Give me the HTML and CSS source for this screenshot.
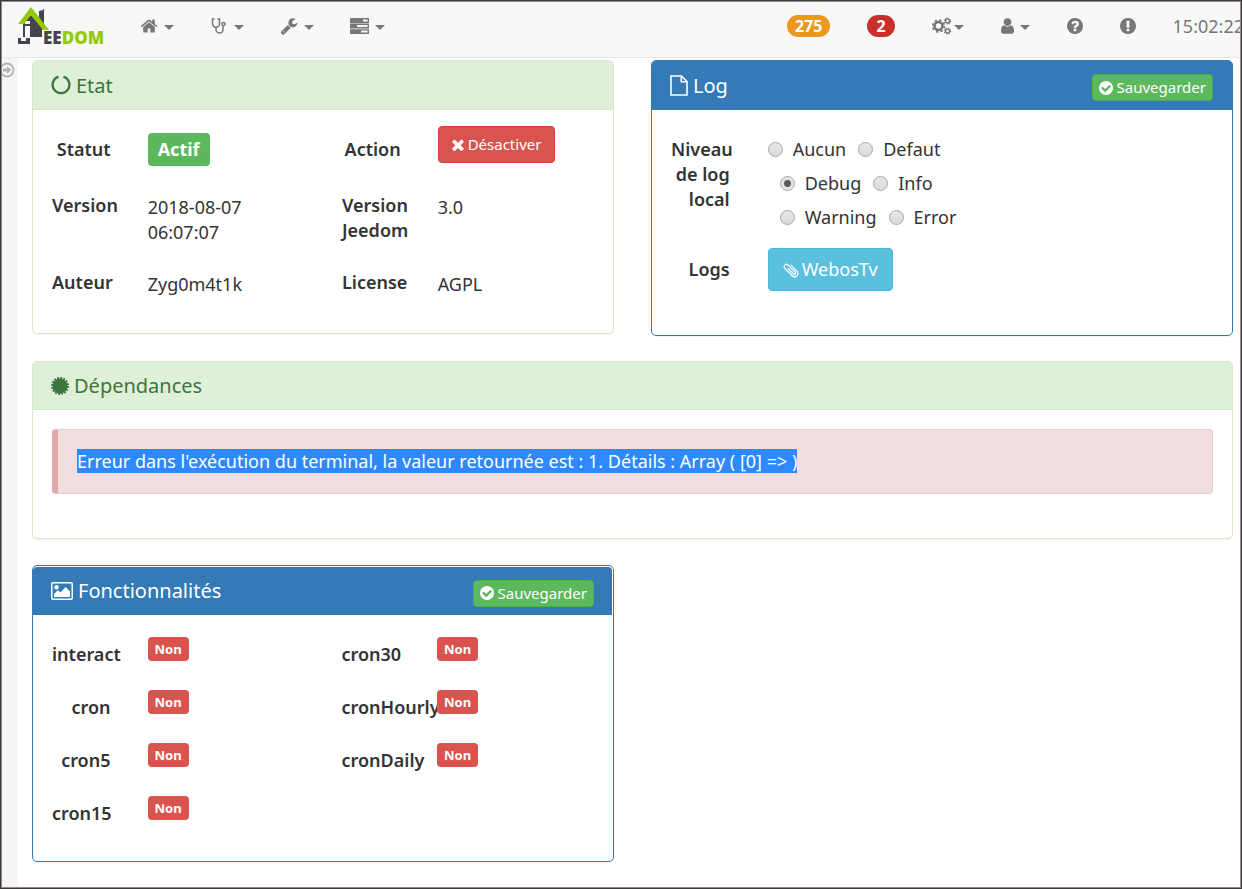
FILE: index.html
```html
<!DOCTYPE html>
<html lang="fr">
<head>
<meta charset="utf-8">
<title>Jeedom</title>
<link rel="stylesheet" href="styles.css">
</head>
<body>
<svg class="defs" aria-hidden="true">
  <symbol id="check" viewBox="128 128 1536 1536"><path d="M1412 734q0-28-18-46l-91-90q-19-19-45-19t-45 19l-408 407-226-226q-19-19-45-19t-45 19l-91 90q-18 18-18 46 0 27 18 45l362 362q19 19 45 19 27 0 46-19l543-543q18-18 18-45zm252 162q0 209-103 385.500t-279.500 279.500-385.500 103-385.500-103-279.500-279.500-103-385.500 103-385.500 279.500-279.500 385.500-103 385.500 103 279.500 279.500 103 385.500z"/></symbol>
</svg>
<header class="navbar">
  <a class="brand" href="#" aria-label="Jeedom">
    <svg width="90" height="48" viewBox="0 0 90 48">
      <path fill="#45444c" d="M21 5l4-1v-1l2 1h-1v18h-5z"/>
      <path fill="#45444c" d="M5 16l8-7 11 13v9H12v-16H7v16H5z"/>
      <path fill="#45444c" d="M7 18h5v2H7zM0 32h3v3h5v-3h4v6H0z"/>
      <path fill="#94ca02" d="M13 1L0 18h6l7-9 12 15h6z"/>
      <text class="brand-text" x="25" y="38" fill="#45444c">EE<tspan fill="#94ca02">DOM</tspan></text>
    </svg>
  </a>
  <nav class="menu">
    <a href="#" aria-label="Accueil"><svg class="icon" width="18" height="18" viewBox="0 0 1792 1792"><path d="M1472 992v480q0 26-19 45t-45 19h-384v-384h-256v384h-384q-26 0-45-19t-19-45v-480q0-1 .5-3t.5-3l575-474 575 474q1 2 1 6zm223-69l-62 74q-8 9-21 11h-3q-13 0-21-7l-692-577-692 577q-12 8-24 7-13-2-21-11l-62-74q-8-10-7-23.5t11-21.5l719-599q32-26 76-26t76 26l244 204v-195q0-14 9-23t23-9h192q14 0 23 9t9 23v408l219 182q10 8 11 21.5t-7 23.5z"/></svg><i class="caret"></i></a>
    <a href="#" aria-label="Analyse"><svg class="icon line" width="18" height="18" viewBox="0 0 18 18"><path d="M4.500 2H2.500v4.500a3.500 3.700 0 0 0 7 0V2h-2M6 10.500v2a3.500 3.500 0 0 0 7 0V9"/><circle cx="13.500" cy="7" r="1.600"/></svg><i class="caret"></i></a>
    <a href="#" aria-label="Outils"><svg class="icon" width="18" height="18" viewBox="0 0 1792 1792"><path d="M448 1472q0-26-19-45t-45-19-45 19-19 45 19 45 45 19 45-19 19-45zm644-420l-682 682q-37 37-90 37-52 0-91-37l-106-108q-38-36-38-90 0-53 38-91l681-681q39 98 114.500 173.500t173.500 114.500zm634-435q0 39-23 106-47 134-164.500 217.500t-258.500 83.500q-185 0-316.500-131.500t-131.500-316.500 131.500-316.500 316.500-131.500q58 0 121.500 16.500t107.500 46.500q16 11 16 28t-16 28l-293 169v224l193 107q5-3 79-48.500t135.500-81 70.500-35.500q15 0 23.500 10t8.500 25z"/></svg><i class="caret"></i></a>
    <a href="#" aria-label="Plugins"><svg class="icon" width="19" height="16" viewBox="0 0 19 16"><path fill-rule="evenodd" d="M.5 0h18q.5 0 .5.500v4q0 .5-.5.500H.5Q0 5 0 4.500v-4Q0 0 .5 0zM13 1.500v2h4.600v-2zM.5 5.600h18q.5 0 .5.500v4q0 .5-.5.500H.5q-.5 0-.5-.5v-4q0-.5.500-.5zM7 7.100v2h10.600v-2zM.5 11.200h18q.5 0 .5.500v3.800q0 .5-.5.500H.5q-.5 0-.5-.5v-3.800q0-.5.500-.5zM11 12.600v2h6.600v-2z"/></svg><i class="caret"></i></a>
  </nav>
  <nav class="tools">
    <a href="#" class="count orange">275</a>
    <a href="#" class="count red">2</a>
    <a href="#" class="tight" aria-label="Réglages"><svg class="icon line" width="20" height="18" viewBox="0 0 20 18"><circle cx="6.500" cy="9" r="4" stroke-width="2.600"/><circle cx="6.500" cy="9" r="5.900" stroke-width="1.700" stroke-dasharray="2.320 2.320"/><circle cx="15.500" cy="4" r="2" stroke-width="1.400"/><circle cx="15.500" cy="4" r="3.100" stroke-width="1.100" stroke-dasharray="1.220 1.220"/><circle cx="15.500" cy="14" r="2" stroke-width="1.400"/><circle cx="15.500" cy="14" r="3.100" stroke-width="1.100" stroke-dasharray="1.220 1.220"/></svg><i class="caret"></i></a>
    <a href="#" aria-label="Profil"><svg class="icon" width="13" height="16" viewBox="256 128 1280 1536"><path d="M1536 1399q0 109-62.500 187t-150.500 78h-854q-88 0-150.500-78t-62.500-187q0-85 8.500-160.500t31.500-152 58.500-131 94-89 134.500-34.500q131 128 313 128t313-128q76 0 134.500 34.500t94 89 58.500 131 31.500 152 8.500 160.500zm-256-887q0 159-112.500 271.500t-271.500 112.500-271.500-112.500-112.500-271.500 112.500-271.500 271.500-112.500 271.500 112.500 112.500 271.500z"/></svg><i class="caret"></i></a>
    <a href="#" aria-label="Aide"><svg class="icon" width="16" height="16" viewBox="128 128 1536 1536"><path d="M1024 1376v-192q0-14-9-23t-23-9h-192q-14 0-23 9t-9 23v192q0 14 9 23t23 9h192q14 0 23-9t9-23zm256-672q0-88-55.500-163t-138.500-116-170-41q-243 0-371 213-15 24 8 42l132 100q7 6 19 6 16 0 25-12 53-68 86-92 34-24 86-24 48 0 85.500 26t37.500 59q0 38-20 61t-68 45q-63 28-115.500 86.500t-52.500 125.500v36q0 14 9 23t23 9h192q14 0 23-9t9-23q0-19 21.500-49.500t54.500-49.500q32-18 49-28.500t46-35 44.500-48 28-60.500 12.500-81zm384 192q0 209-103 385.500t-279.500 279.500-385.500 103-385.500-103-279.500-279.500-103-385.500 103-385.500 279.500-279.500 385.500-103 385.500 103 279.500 279.500 103 385.500z"/></svg></a>
    <a href="#" aria-label="Signaler"><svg class="icon" width="16" height="16" viewBox="128 128 1536 1536"><path d="M896 128q209 0 385.500 103t279.500 279.500 103 385.500-103 385.500-279.500 279.500-385.500 103-385.500-103-279.500-279.500-103-385.500 103-385.500 279.500-279.500 385.500-103zm127 1247v-190q0-14-9-23.500t-22-9.500h-192q-13 0-23 10t-10 23v190q0 13 10 23t23 10h192q13 0 22-9.500t9-23.500zm-2-344l18-621q0-12-10-18-10-8-24-8h-220q-14 0-24 8-10 6-10 18l17 621q0 10 10 17.500t24 7.500h185q14 0 23.500-7.500t10.500-17.500z"/></svg></a>
    <span class="clock">15:02:22</span>
  </nav>
</header>
<div class="page">
  <aside class="rail">
    <svg width="16" height="16" viewBox="0 0 16 16" fill="none" stroke="#b4b4b4"><circle cx="7" cy="8" r="6.500" stroke-width="2"/><path fill="#b4b4b4" stroke="none" d="M3 6.500h4V4l4.200 4L7 12V9.500H3z"/></svg>
  </aside>
  <main class="content">
    <div class="columns">
      <section class="panel success">
        <div class="panel-heading"><h3><svg width="20" height="20" viewBox="0 0 20 20" fill="none" stroke="currentColor" stroke-width="2.300"><path d="M7.500 1.700A8.400 8.400 0 1 0 12.500 1.700"/></svg>Etat</h3></div>
        <div class="panel-body">
          <dl class="fields">
            <dt>Statut</dt><dd class="compact"><span class="tag ok">Actif</span></dd>
            <dt>Action</dt><dd class="flush"><button type="button" class="btn danger"><svg width="12" height="12" viewBox="302 302 1188 1252" fill="currentColor"><path d="M1490 1322q0 40-28 68l-136 136q-28 28-68 28t-68-28l-294-294-294 294q-28 28-68 28t-68-28l-136-136q-28-28-28-68t28-68l294-294-294-294q-28-28-28-68t28-68l136-136q28-28 68-28t68 28l294 294 294-294q28-28 68-28t68 28l136 136q28 28 28 68t-28 68l-294 294 294 294q28 28 28 68z"/></svg>Désactiver</button></dd>
            <dt>Version</dt><dd>2018-08-07 06:07:07</dd>
            <dt>Version Jeedom</dt><dd>3.0</dd>
            <dt>Auteur</dt><dd>Zyg0m4t1k</dd>
            <dt>License</dt><dd>AGPL</dd>
          </dl>
        </div>
      </section>
      <section class="panel primary">
        <div class="panel-heading">
          <h3><svg width="18" height="21" viewBox="0 0 18 21" fill="none" stroke="currentColor" stroke-width="1.600"><path d="M1 1h10.500L17 6.500V20H1zM11.300 1v5.700H17"/></svg>Log</h3>
          <button type="button" class="btn save"><svg width="14" height="14" fill="currentColor"><use href="#check"/></svg>Sauvegarder</button>
        </div>
        <div class="panel-body">
          <div class="log-row" role="radiogroup" aria-labelledby="niveau">
            <div class="name" id="niveau">Niveau de log local</div>
            <div class="radios">
              <label><input type="radio" name="log">Aucun</label>
              <label><input type="radio" name="log">Defaut</label>
              <label><input type="radio" name="log" checked>Debug</label>
              <label><input type="radio" name="log">Info</label>
              <label><input type="radio" name="log">Warning</label>
              <label><input type="radio" name="log">Error</label>
            </div>
          </div>
          <div class="log-row last">
            <div class="name">Logs</div>
            <div class="file"><a href="#" class="btn info"><svg width="16" height="16" viewBox="-8 -8 16 16" fill="none" stroke="currentColor" stroke-width="1.300" stroke-linecap="round"><path transform="rotate(-45)" d="M3.400-3.500V5a3.300 3.300 0 0 1-6.600 0V-5.500a2.300 2.300 0 0 1 4.600 0V4.500a1.200 1.200 0 0 1-2.400 0V-3"/></svg>WebosTv</a></div>
          </div>
        </div>
      </section>
    </div>
    <section class="panel success">
      <div class="panel-heading"><h3><svg width="18" height="18" viewBox="-9 -9 18 18" fill="currentColor" stroke="currentColor"><circle r="7.500" stroke="none"/><circle r="8" fill="none" stroke-width="1.900" stroke-dasharray="1.900 1.242"/></svg>Dépendances</h3></div>
      <div class="panel-body deps">
        <div class="alert" role="alert"><mark>Erreur dans l'exécution du terminal, la valeur retournée est : 1. Détails : Array ( [0] =&gt; )</mark></div>
      </div>
    </section>
    <div class="columns">
      <section class="panel primary framed">
        <div class="panel-heading">
          <h3><svg width="22" height="18" viewBox="0 0 22 18" fill="currentColor"><path fill-rule="evenodd" d="M2 0h18q2 0 2 2v14q0 2-2 2H2q-2 0-2-2V2q0-2 2-2zm0 1.500q-.5 0-.5.500v14q0 .5.500.5h18q.5 0 .5-.5V2q0-.5-.5-.5z"/><circle cx="5.500" cy="5.200" r="2.200"/><path d="M3 15v-3l4-4 2.500 2.500L14.500 5 19 9.500V15z"/></svg>Fonctionnalités</h3>
          <button type="button" class="btn save"><svg width="14" height="14" fill="currentColor"><use href="#check"/></svg>Sauvegarder</button>
        </div>
        <div class="panel-body">
          <dl class="fields features">
            <dt>interact</dt><dd><span class="tag no">Non</span></dd>
            <dt>cron30</dt><dd><span class="tag no">Non</span></dd>
            <dt>cron</dt><dd><span class="tag no">Non</span></dd>
            <dt>cronHourly</dt><dd><span class="tag no">Non</span></dd>
            <dt>cron5</dt><dd><span class="tag no">Non</span></dd>
            <dt>cronDaily</dt><dd><span class="tag no">Non</span></dd>
            <dt>cron15</dt><dd><span class="tag no">Non</span></dd>
          </dl>
        </div>
      </section>
    </div>
  </main>
</div>
</body>
</html>
```

FILE: styles.css
```css
* { box-sizing: border-box; }

body {
  margin: 0;
  min-height: 100vh;
  display: flex;
  flex-direction: column;
  font: 18px/25px "Noto Sans", "Open Sans", sans-serif;
  color: #333;
  background: #fff;
  overflow-x: hidden;
}

/* thin dark frame around the window */
body::after {
  content: "";
  position: fixed;
  inset: 0;
  border: 1px solid #3d393b;
  box-shadow: inset 0 0 0 1px #8f8d8e;
  pointer-events: none;
}

a { color: inherit; text-decoration: none; }
svg { flex: none; display: block; }
.defs { position: absolute; width: 0; height: 0; }

/* top bar */
.navbar {
  display: flex;
  justify-content: space-between;
  height: 58px;
  padding-left: 18px;
  background: #f8f8f8;
  border-bottom: 1px solid #e7e7e7;
  color: #777;
}
.brand { padding-top: 6px; }
.brand svg { overflow: visible; }
.brand-text { font: 800 17px/20px "Open Sans", "Noto Sans", sans-serif; }
.menu, .tools { display: flex; align-items: center; height: 52px; }
.menu { gap: 36px; margin-left: 32px; margin-right: auto; }
.tools { gap: 37px; margin-right: -2px; }
.menu a, .tools a { display: flex; align-items: center; gap: 6px; }
.tools .tight { gap: 2px; }
.icon { fill: currentColor; }
.icon.line { fill: none; stroke: currentColor; stroke-width: 1.5; }
.caret {
  border: 5px solid transparent;
  border-top-color: currentColor;
  border-bottom: 0;
  margin-top: 3px;
}
.tools .count {
  height: 22px;
  padding: 0 8px;
  border-radius: 11px;
  font-size: 16px;
  font-weight: 700;
  color: #fff;
}
.tools .red { padding: 0 9px; }
.orange { background: #ec971f; }
.red { background: #c9302c; }
.clock { white-space: nowrap; }

.page { flex: 1; display: flex; }
.rail { flex: none; width: 18px; padding-top: 4px; background: #f5f5f5; }
.content { flex: 1; min-width: 0; padding: 2px 9px 0 14px; }
.columns { display: grid; grid-template-columns: 1fr 1fr; gap: 37px; align-items: start; }

/* panels */
.panel {
  margin-bottom: 26px;
  border: 1px solid;
  border-radius: 5px;
  box-shadow: 0 1px 1px rgba(0, 0, 0, .05);
}
.columns .panel { margin-bottom: 25px; }
.panel-heading {
  display: flex;
  justify-content: space-between;
  align-items: center;
  height: 48px;
  padding: 0 19px 0 18px;
  border-bottom: 1px solid;
  border-radius: 4px 4px 0 0;
}
.columns .panel-heading { height: 49px; }
.panel h3 {
  display: flex;
  align-items: center;
  gap: 5px;
  margin: 0;
  font-size: 20px;
  font-weight: 400;
}
.success, .success > .panel-heading { border-color: #d6e9c6; }
.success > .panel-heading { background: #dff0d8; color: #3c763d; }
.primary, .primary > .panel-heading { border-color: #337ab7; }
.primary > .panel-heading { background: #337ab7; color: #fff; }
.framed { padding: 1px 1px 0 0; }
.columns .framed .panel-heading { height: 48px; padding-right: 18px; }
.panel-body { padding: 16px 0 18px; }

/* label / value grid */
.fields { display: grid; grid-template-columns: 2fr 4fr 2fr 4fr; margin: 0; }
.fields dt, .fields dd { min-width: 0; min-height: 56px; margin: 0; }
.fields dt, .name { padding: 11px 19px 0; font-weight: 600; text-align: right; }
.fields dd { padding: 13px 18px 14px; }
.fields .compact { padding-top: 7px; padding-bottom: 0; }
.fields .flush { padding-top: 0; padding-bottom: 0; }
.features dt, .features dd { min-height: 53px; }
.features dd { padding-top: 6px; padding-bottom: 0; }

.tag { display: inline-block; color: #fff; font-weight: 700; border-radius: 4px; }
.ok { padding: 4px 10px; background: #5cb85c; }
.no {
  display: block;
  position: relative;
  width: fit-content;
  padding: 0 7px;
  font-size: 13px;
  line-height: 24px;
  background: #d9534f;
}

/* buttons */
.btn {
  display: inline-flex;
  align-items: center;
  border: 1px solid;
  border-radius: 4px;
  font-family: inherit;
  font-size: 15px;
  line-height: 21px;
  color: #fff;
  cursor: pointer;
}
.danger { gap: 4px; padding: 7px 13px; background: #d9534f; border-color: #d43f3a; }
.save { gap: 4px; margin-top: 5px; padding: 2px 6px; background: #5cb85c; border-color: #4cae4c; }
.info { gap: 3px; padding: 8px 14px; font-size: 18px; line-height: 25px; background: #5bc0de; border-color: #46b8da; }

/* log panel */
.log-row { display: grid; grid-template-columns: 2fr 5fr 5fr; min-height: 120px; }
.log-row.last { min-height: 71px; }
.name { min-width: 0; }
.radios { display: flex; flex-wrap: wrap; align-content: start; row-gap: 9px; padding: 11px 19px 0; }
.radios label { display: flex; align-items: center; gap: 10px; margin-left: 12px; }
.radios label:first-child { margin-left: 0; }
.radios input {
  appearance: none;
  width: 15px;
  height: 15px;
  margin: 0;
  border: 1px solid #a8a8a8;
  border-radius: 50%;
  background: linear-gradient(#e8e8e8, #dadada);
}
.radios input:checked { background: radial-gradient(circle, #5b5b5b 3px, #e4e4e4 4px); }
.file { padding: 2px 19px 0; }

/* dependencies */
.deps { padding: 19px; padding-bottom: 44px; }
.alert {
  padding: 19px;
  border: 1px solid #ebccd1;
  border-left: 6px solid #dfa8aa;
  border-radius: 4px;
  background: #f2dede;
}
mark { background: #2f89fc; color: #fff; }
```
